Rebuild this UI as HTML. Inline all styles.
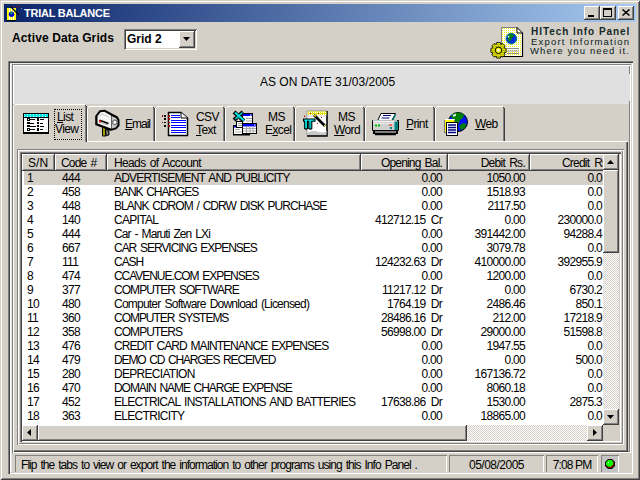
<!DOCTYPE html>
<html><head><meta charset="utf-8">
<style>
*{margin:0;padding:0;box-sizing:border-box}
html,body{width:640px;height:480px;overflow:hidden;background:#d4d0c8;font-family:"Liberation Sans",sans-serif;font-size:11px;color:#000}
.a{position:absolute}
.raised{box-shadow:inset -1px -1px #404040,inset 1px 1px #fff,inset -2px -2px #808080}
.sunk{box-shadow:inset 1px 1px #808080,inset -1px -1px #fff,inset 2px 2px #404040,inset -2px -2px #d4d0c8}
.t{white-space:nowrap;line-height:14px}
#win{left:0;top:0;width:640px;height:480px;box-shadow:inset 1px 1px #d4d0c8,inset -1px -1px #404040,inset 2px 2px #fff,inset -2px -2px #808080}
#title{left:4px;top:4px;width:632px;height:18px;background:linear-gradient(to right,#0a246a,#a6caf0)}
.cb{width:16px;height:14px;top:6px;background:#d4d0c8;box-shadow:inset -1px -1px #404040,inset 1px 1px #fff,inset -2px -2px #808080}
.grid .r{position:absolute;left:0;width:581px;height:14px}
.grid .c{position:absolute;top:0;white-space:nowrap;line-height:14px;font-size:12px;letter-spacing:-0.7px}
.hdr{position:absolute;top:0;height:17px;padding-top:1px;word-spacing:1.5px;background:#d4d0c8;box-shadow:inset -1px -1px #404040,inset 1px 1px #fff,inset -2px -2px #808080;line-height:16px;white-space:nowrap;overflow:hidden;font-size:12px;letter-spacing:-0.6px}
.tab{position:absolute;top:106px;height:35px;background:#d4d0c8;box-shadow:inset 1px 1px #fff,inset -1px 0 #404040,inset -2px 0 #808080}
.tab::before{content:"";position:absolute;left:0;top:0;width:1px;height:1px;background:#d4d0c8;box-shadow:1px 0 #d4d0c8,0 1px #d4d0c8,1px 1px #fff}
.tab::after{content:"";position:absolute;right:1px;top:0;width:1px;height:1px;background:#d4d0c8;box-shadow:1px 0 #d4d0c8,1px 1px #d4d0c8,0 1px #404040}
.tab .lbl{position:absolute;line-height:12px;text-align:center;white-space:nowrap}
.u{text-decoration:underline}
.lbl2{font-size:12px;letter-spacing:-0.6px;line-height:16px}
.chk{background-color:#fff;background-image:linear-gradient(45deg,#d4d0c8 25%,transparent 25%,transparent 75%,#d4d0c8 75%),linear-gradient(45deg,#d4d0c8 25%,transparent 25%,transparent 75%,#d4d0c8 75%);background-size:2px 2px;background-position:0 0,1px 1px}
.sp{position:absolute;height:17px;top:455px;box-shadow:inset 1px 1px #808080,inset -1px 0 #fff;line-height:21px;white-space:nowrap;overflow:hidden}
</style></head><body>
<div id="win" class="a"></div>
<!-- title bar -->
<div id="title" class="a"></div>
<svg class="a" style="left:6px;top:6px" width="16" height="16" viewBox="0 0 16 16">
  <rect x="1" y="2" width="9" height="13" fill="#ffff00"/>
  <rect x="3" y="2" width="1" height="13" fill="#fff"/><rect x="5" y="2" width="1" height="13" fill="#fff"/><rect x="7" y="2" width="1" height="13" fill="#fff"/>
  <rect x="1" y="14" width="9" height="1" fill="#000"/>
  <circle cx="5.5" cy="8.3" r="2.7" fill="#0000d0"/><path d="M3.5 7Q5 5.5 7 6.5L6 8.5L4.5 8Z" fill="#00a060"/><rect x="15" y="2" width="1" height="1" fill="#a0a0a0"/>
  <line x1="5" y1="1" x2="13" y2="9" stroke="#000" stroke-width="1.3"/>
  <rect x="7" y="0" width="1" height="1" fill="#c00000"/><rect x="10" y="0" width="1" height="1" fill="#c00000"/><rect x="13" y="0" width="1" height="1" fill="#c00000"/>
</svg>
<div class="a t" style="left:24px;top:6px;color:#fff;font-weight:bold;letter-spacing:-0.25px;line-height:14px">TRIAL BALANCE</div>
<div class="a cb" style="left:584px"><div class="a" style="left:4px;top:9px;width:6px;height:2px;background:#000"></div></div>
<div class="a cb" style="left:600px"><div class="a" style="left:3px;top:2px;width:9px;height:9px;border:1px solid #000;border-top-width:2px"></div></div>
<div class="a cb" style="left:618px"><svg class="a" style="left:4px;top:3px" width="8" height="7" viewBox="0 0 8 7"><path d="M0.5 0.5L7.5 6.5M7.5 0.5L0.5 6.5" stroke="#000" stroke-width="1.5"/></svg></div>

<!-- top controls -->
<div class="a t" style="left:12px;top:30px;font-size:12px;font-weight:bold;line-height:16px;letter-spacing:0.12px">Active Data Grids</div>
<div class="a sunk" style="left:124px;top:29px;width:73px;height:21px;background:#fff"></div>
<div class="a t" style="left:127px;top:31px;font-size:12px;font-weight:bold;line-height:16px">Grid 2</div>
<div class="a raised" style="left:179px;top:31px;width:16px;height:17px;background:#d4d0c8"></div>
<svg class="a" style="left:183px;top:37px" width="8" height="5"><path d="M0 0H7L3.5 4Z" fill="#000"/></svg>

<!-- logo -->
<svg class="a" style="left:490px;top:26px" width="36" height="34" viewBox="0 0 36 34">
  <defs><pattern id="dots" width="2" height="2" patternUnits="userSpaceOnUse"><rect width="2" height="2" fill="#fff"/><rect width="1" height="1" fill="#f0f000"/></pattern></defs>
  <path d="M11.5 1.5H27L32.5 7V30.5H11.5Z" fill="url(#dots)" stroke="#808080"/>
  <path d="M32.5 7V30.5H11.5" fill="none" stroke="#000" stroke-width="1.2"/>
  <path d="M27 1.5V7H32.5Z" fill="#fff" stroke="#000"/>
  <circle cx="21.3" cy="12.6" r="5.3" fill="#0030e0" stroke="#008080" stroke-width="1"/>
  <path d="M18 9Q20 7.5 23 8.5L24 10L21.5 12.5L20 16L18 14Z" fill="#008000"/>
  <path d="M17.5 10.5L19.5 9.5L19 12Z" fill="#fff"/>
  <path d="M17 22.5H29M17 25H29M17 27.5H29" stroke="#909090"/>
  <g transform="translate(8.5 24.3)">
    <defs><pattern id="gd" width="2" height="2" patternUnits="userSpaceOnUse"><rect width="2" height="2" fill="#f8f800"/><rect width="1" height="1" fill="#404000"/></pattern></defs>
    <path d="M-1.8 -7.8H1.8L2.3 -5.8L4.3 -6.8L6.6 -4.5L5.6 -2.5L7.6 -2V2L5.6 2.5L6.6 4.5L4.3 6.8L2.3 5.8L1.8 7.8H-1.8L-2.3 5.8L-4.3 6.8L-6.6 4.5L-5.6 2.5L-7.6 2V-2L-5.6 -2.5L-6.6 -4.5L-4.3 -6.8L-2.3 -5.8Z" fill="url(#gd)" stroke="#000" stroke-width="0.8"/>
    <circle r="3.2" fill="#f0f000" stroke="#000" stroke-width="1"/>
    <circle r="1.3" fill="#fff"/>
  </g>
</svg>
<div class="a t" style="left:531px;top:26px;font-weight:bold;font-size:10px;color:#142828;letter-spacing:0.95px;line-height:12px">HITech Info Panel</div>
<div class="a t" style="left:531px;top:35.5px;font-size:9.5px;color:#0c2020;letter-spacing:1.2px;line-height:12px">Export Information</div>
<div class="a t" style="left:530px;top:44.5px;font-size:9.5px;color:#0c2020;letter-spacing:1.13px;line-height:12px">Where you need it.</div>

<!-- outer frame -->
<div class="a" style="left:8px;top:61px;width:625px;height:413px;box-shadow:inset 1px 1px #808080,inset 2px 2px #404040,inset -1px -1px #fff,inset -2px -2px #d4d0c8"></div>
<div class="a" style="left:10px;top:63px;width:621px;height:409px;box-shadow:inset 0 1px #e8e8e8,inset 1px 0 #fff,inset 2px 0 #e4e4e4"></div>
<!-- etched panel -->
<div class="a" style="left:12px;top:64px;width:619px;height:389px;box-shadow:inset 1px 1px #808080,inset -1px -1px #fff,inset 2px 2px #fff,inset -2px -2px #808080"></div>
<!-- header label -->
<div class="a" style="left:14px;top:66px;width:615px;height:38px;background:#e0e0e0"></div>
<div class="a" style="left:629px;top:74px;width:1px;height:27px;background:#e0e0e0"></div>
<div class="a t" style="left:260px;top:74px;font-size:12px;line-height:16px">AS ON DATE 31/03/2005</div>

<!-- tab page -->
<div class="a" style="left:13px;top:141px;width:615px;height:311px;box-shadow:inset 1px 1px #fff,inset -1px -1px #404040,inset -2px -2px #808080"></div>
<!-- etched frame A -->
<div class="a" style="left:17px;top:149px;width:607px;height:296px;box-shadow:inset 1px 1px #808080,inset -1px -1px #fff,inset 2px 2px #fff,inset -2px -2px #808080"></div>

<!-- tabs -->
<div class="tab" style="left:87px;width:68px"></div>
<div class="tab" style="left:155px;width:70px"></div>
<div class="tab" style="left:225px;width:70px"></div>
<div class="tab" style="left:295px;width:70px"></div>
<div class="tab" style="left:365px;width:70px"></div>
<div class="tab" style="left:435px;width:70px"></div>
<div class="tab" style="left:13px;top:104px;width:74px;height:38px;box-shadow:inset 1px 1px #fff,inset -1px 0 #404040,inset -2px 0 #808080"></div>

<!-- tab icons -->
<svg class="a" style="left:23px;top:113px" width="27" height="23" viewBox="0 0 27 23">
  <defs><pattern id="cy" width="3" height="2" patternUnits="userSpaceOnUse"><rect width="3" height="2" fill="#00e8e8"/><rect x="1" y="1" width="1" height="1" fill="#c0ffff"/></pattern></defs>
  <rect x="0.5" y="0.5" width="25" height="20" fill="#fff" stroke="#000"/>
  <rect x="1" y="1" width="24" height="3" fill="url(#cy)"/>
  <path d="M0 4.5H26" stroke="#000"/>
  <rect x="1" y="19" width="25" height="2" fill="#000"/>
  <g fill="#000">
    <rect x="4" y="5" width="3" height="3"/><rect x="7" y="6" width="5" height="1"/>
    <rect x="4" y="9" width="3" height="2"/><rect x="7" y="10" width="4" height="1"/>
    <rect x="4" y="12" width="3" height="2"/><rect x="7" y="13" width="6" height="1"/>
    <rect x="4" y="15" width="3" height="3"/><rect x="7" y="16" width="5" height="1"/>
    <rect x="14" y="5" width="2" height="3"/><rect x="17" y="6" width="4" height="1"/>
    <rect x="14" y="9" width="2" height="2"/><rect x="17" y="10" width="3" height="1"/>
    <rect x="14" y="12" width="2" height="2"/><rect x="17" y="13" width="4" height="1"/>
    <rect x="14" y="15" width="2" height="3"/><rect x="17" y="16" width="3" height="1"/>
  </g>
  <rect x="5" y="6" width="1" height="1" fill="#fff"/><rect x="5" y="16" width="1" height="1" fill="#fff"/>
</svg>
<div class="a" style="left:54px;top:109px;width:28px;height:31px;border:1px dotted #000"></div>
<div class="a t lbl2" style="left:57px;top:109px"><span class="u">L</span>ist</div>
<div class="a t lbl2" style="left:55px;top:121px">View</div>

<svg class="a" style="left:91px;top:106px" width="32" height="32" viewBox="0 0 32 32">
  <path d="M11.5 21V30H14.5V22Z" fill="#a0a000" stroke="#000"/>
  <path d="M14.5 23L18 24V29L14.5 30Z" fill="#404040" stroke="#000" stroke-width="0.8"/>
  <path d="M15.5 25.5L17 26.5M15.5 27L17 28" stroke="#c0c0c0" stroke-width="0.7"/>
  <path d="M5.5 9.5L9 5L13.5 4.5L21 8.5L26 11L27.7 14V19.5L25 22.5L20 24L5 18.5V10Z" fill="#000" stroke="#000" stroke-width="1.6" stroke-linejoin="round"/>
  <path d="M6.5 10L9.5 6.2L13.3 5.8L20 9.5V22.5L6.5 17.5Z" fill="#f4f4f4"/>
  <path d="M7 10.5L11 8L18 11" stroke="#c8c8c8" stroke-width="1" fill="none"/>
  <path d="M20.5 10L25 12L26.5 14.5V19L24.5 21.5L20.5 22.8Z" fill="#c8c8c8"/>
  <circle cx="23.8" cy="16.3" r="2.3" fill="#e8e8e8" stroke="#505050" stroke-width="1"/>
  <circle cx="24.3" cy="16.6" r="0.9" fill="#fff"/>
  <path d="M8.5 14.2L17.5 17.5" stroke="#000" stroke-width="1.6"/>
  <path d="M9 16L17 19" stroke="#909090" stroke-width="0.8"/>
  <rect x="8" y="14.2" width="1.6" height="2.2" fill="#ff0000"/>
</svg>
<div class="a t lbl2" style="left:125px;top:116px;letter-spacing:-1px"><span class="u">E</span>mail</div>

<svg class="a" style="left:161px;top:111px" width="28" height="26" viewBox="0 0 28 26">
  <path d="M7.5 1.5H20L26.5 7V24.5H7.5Z" fill="#fff" stroke="#000" stroke-width="1.5"/>
  <path d="M20 1.5V7H26.5" fill="#fff" stroke="#000"/>
  <g stroke="#0000ff" stroke-width="1"><path d="M10 4.5H19M10 6.5H19M10 9.5H25M10 11.5H25M10 14.5H25M10 16.5H25M10 19.5H25M10 21.5H25"/></g>
  <g fill="#a00000"><rect x="1" y="4" width="1" height="2"/><rect x="7" y="4" width="2" height="2"/><rect x="7" y="7" width="2" height="2"/><rect x="1" y="11" width="1" height="1"/><rect x="7" y="11" width="2" height="1"/><rect x="7" y="14" width="2" height="2"/></g>
  <g fill="#000"><rect x="3" y="4" width="2" height="2"/><rect x="3" y="7" width="2" height="2"/><rect x="3" y="11" width="2" height="1"/><rect x="3" y="14" width="2" height="2"/></g>
</svg>
<div class="a t lbl2" style="left:196px;top:109px">CSV</div>
<div class="a t lbl2" style="left:196px;top:122px"><span class="u">T</span>ext</div>

<svg class="a" style="left:231px;top:109px" width="28" height="28" viewBox="0 0 28 28">
  <rect x="2.5" y="16.5" width="16" height="9" fill="#fff" stroke="#000"/><rect x="3" y="17" width="3" height="1.5" fill="#0000ff"/>
  <path d="M4 20.5H9M4 23H15" stroke="#b0b0b0"/><rect x="2" y="25" width="17" height="1.5" fill="#000"/>
  <rect x="5.5" y="12.5" width="6" height="6" fill="#fff" stroke="#000"/><path d="M7 14.5H11M7 16.5H11" stroke="#a0a0a0" stroke-width="1"/>
  <rect x="11.5" y="4.5" width="10" height="10" fill="#fff" stroke="#000"/><rect x="12" y="5" width="9" height="2" fill="#0000ff"/><rect x="19" y="5.5" width="1.5" height="1" fill="#fff"/>
  <path d="M15 9.5H21M15 12H21" stroke="#a0a0a0" stroke-width="1.2"/>
  <rect x="11.5" y="14.5" width="14" height="10" fill="#fff" stroke="#000"/><rect x="12" y="15" width="13" height="2.5" fill="#0000ff"/><rect x="23" y="15.5" width="1.5" height="1" fill="#fff"/>
  <path d="M12 19.5H25M12 22H25M15.5 17V24M19 17V24M22 17V24" stroke="#a8a8a8"/>
  <path d="M3 3L13 12M12 3L3 11" stroke="#000" stroke-width="4.2"/>
  <path d="M4 3.5L13 11.5" stroke="#00e0e0" stroke-width="2.2"/><path d="M11.5 3.5L4 10" stroke="#00e0e0" stroke-width="1.4"/>
  <path d="M4 10L7 8L9 10Z" fill="#008080"/>
</svg>
<div class="a t lbl2" style="left:268px;top:109px">MS</div>
<div class="a t lbl2" style="left:265px;top:122px">E<span class="u">x</span>cel</div>

<svg class="a" style="left:301px;top:108px" width="30" height="30" viewBox="0 0 30 30">
  <defs><pattern id="yd" width="2" height="2" patternUnits="userSpaceOnUse"><rect width="2" height="2" fill="#e8e800"/><rect width="1" height="1" fill="#fff"/></pattern></defs>
  <path d="M6 3H26V27H6Z" fill="#fff" stroke="#808080" stroke-width="0.8"/>
  <path d="M26 3V28H6" fill="none" stroke="#000" stroke-width="1.5"/>
  <rect x="6.5" y="3.5" width="19" height="3.5" fill="url(#yd)"/>
  <path d="M6.5 7L8 9L9.5 7L11 9L12.5 7L14 9L15.5 7L17 9L18.5 7L20 9L21.5 7L23 9L24.5 7L25.5 8" fill="none" stroke="#c0c0c0" stroke-width="0.6"/>
  <path d="M6.5 24Q12 21 16 23Q21 25 25.5 23.5V27H6.5Z" fill="#c8c8c8"/>
  <path d="M6.5 24Q12 21 16 23Q21 25 25.5 23.5" fill="none" stroke="#fff"/>
  <path d="M2.5 11H14V13.2H10.8V20.5Q9.3 21.8 7.8 20.5V13.2H6.5V20.5Q5 21.8 3.5 20.5V13.2H2.5Z" fill="#00e8e8" stroke="#000" stroke-width="1.1"/>
  <path d="M4 14V20M9.3 14V20" stroke="#008080" stroke-width="0.6"/>
  <path d="M13 7L24 18" stroke="#000" stroke-width="2.6"/>
  <path d="M13 7L15 8.5" stroke="#e8e800" stroke-width="1.5"/>
  <rect x="23" y="17" width="1.3" height="1.3" fill="#e8e800"/>
  <g fill="#c00000"><rect x="9" y="5" width="1" height="1"/><rect x="17" y="5" width="1" height="1"/><rect x="20" y="9" width="1" height="1"/><rect x="16" y="15" width="1" height="1"/><rect x="3" y="7.5" width="1" height="1.5"/></g>
</svg>
<div class="a t lbl2" style="left:338px;top:109px">MS</div>
<div class="a t lbl2" style="left:334px;top:122px"><span class="u">W</span>ord</div>

<svg class="a" style="left:369px;top:107px" width="32" height="32" viewBox="0 0 32 32">
  <path d="M12 6.5H26.5L22 15H8Z" fill="#fff" stroke="#000"/>
  <path d="M26 7L22.5 14.5L24 14.5L27 8Z" fill="#008080"/>
  <path d="M14 8.5H22M12.5 11H20.5M11 13.5H19.5" stroke="#000080" stroke-width="1.2"/>
  <path d="M3.5 13.5H29.5V23.5H3.5Z" fill="#d0d0d0" stroke="#000"/>
  <path d="M4 14H25L28 14" stroke="#fff" stroke-width="1.5"/>
  <path d="M4 16.5H25" stroke="#e8e8e8"/>
  <path d="M25.5 14.5L29 14.5V23H25.5Z" fill="#008080"/>
  <rect x="6" y="17.5" width="2" height="2" fill="#00c000"/><rect x="9" y="17.5" width="2" height="2" fill="#00c000"/>
  <rect x="20" y="17.5" width="3" height="1" fill="#ff0000"/><rect x="21" y="20" width="2" height="2" fill="#008080"/>
  <path d="M4 23.5H29V27H4Z" fill="#000"/>
  <path d="M6 25H27" stroke="#fff" stroke-width="1"/>
  <path d="M6 27.5H27" stroke="#000" stroke-width="1.5"/>
</svg>
<div class="a t lbl2" style="left:406px;top:116px"><span class="u">P</span>rint</div>

<svg class="a" style="left:440px;top:106px" width="32" height="32" viewBox="0 0 32 32">
  <circle cx="18" cy="16" r="9.5" fill="#0010ff" stroke="#000" stroke-width="1"/>
  <path d="M11 11Q13 6.5 18 6.5L24 8L23 12L20 14L18 19L15 17L13 13Z" fill="#008000"/>
  <path d="M19 20L23 17L26.5 18L25 22L21 24Z" fill="#008000"/>
  <path d="M13 9L15.5 7.5L16 9.5L13.5 11Z" fill="#fff"/>
  <path d="M11.5 9.5L13 8.5" stroke="#00c0c0"/>
  <rect x="4.5" y="13.5" width="10" height="13" fill="#ffff00" stroke="#808080"/>
  <path d="M4.5 13.5H14.5" stroke="#fff"/>
  <rect x="6.5" y="16.5" width="11" height="13" fill="#fff" stroke="#000"/>
  <path d="M8 19H16M8 21.5H16M8 24H16M8 26.5H16" stroke="#000080" stroke-width="1.3"/>
</svg>
<div class="a t lbl2" style="left:475px;top:116px"><span class="u">W</span>eb</div>

<!-- grid -->
<div class="a" style="left:20px;top:152px;width:601px;height:290px;background:#fff;box-shadow:inset 1px 1px #808080,inset 2px 2px #404040,inset -1px -1px #fff,inset -2px -2px #d4d0c8"></div>
<div class="a grid" style="left:22px;top:154px;width:581px;height:271px;overflow:hidden">
  <div class="hdr" style="left:0;width:33px;padding-left:6px;letter-spacing:0.1px">S/N</div>
  <div class="hdr" style="left:33px;width:52px;padding-left:6px;letter-spacing:-0.8px">Code #</div>
  <div class="hdr" style="left:85px;width:254px;padding-left:7px;letter-spacing:-0.63px">Heads of Account</div>
  <div class="hdr" style="left:339px;width:87px;text-align:right;padding-right:6px;letter-spacing:-0.82px">Opening Bal.</div>
  <div class="hdr" style="left:426px;width:82px;text-align:right;padding-right:5px;letter-spacing:-0.72px">Debit Rs.</div>
  <div class="hdr" style="left:508px;width:90px;text-align:left;padding-left:32px;letter-spacing:-0.8px;word-spacing:2.5px">Credit Rs.</div>
  <div id="rows" class="a" style="left:0;top:17px;width:581px;height:254px"><div class="r" style="top:0px"><div class="a" style="left:2px;top:0;width:579px;height:14px;background:#d4d0c8;"></div><div class="c" style="left:5px">1</div><div class="c" style="left:40px">444</div><div class="c" style="left:92px;letter-spacing:-0.821px;word-spacing:1.5px">ADVERTISEMENT AND PUBLICITY</div><div class="c" style="right:161px">0.00</div><div class="c" style="right:78px">1050.00</div><div class="c" style="right:1px">0.0</div></div>
<div class="r" style="top:14px"><div class="a" style="left:2px;top:0;width:579px;height:14px;"></div><div class="c" style="left:5px">2</div><div class="c" style="left:40px">458</div><div class="c" style="left:92px;letter-spacing:-1.066px;word-spacing:1.5px">BANK CHARGES</div><div class="c" style="right:161px">0.00</div><div class="c" style="right:78px">1518.93</div><div class="c" style="right:1px">0.0</div></div>
<div class="r" style="top:28px"><div class="a" style="left:2px;top:0;width:579px;height:14px;"></div><div class="c" style="left:5px">3</div><div class="c" style="left:40px">448</div><div class="c" style="left:92px;letter-spacing:-0.988px;word-spacing:1.5px">BLANK CDROM / CDRW DISK PURCHASE</div><div class="c" style="right:161px">0.00</div><div class="c" style="right:78px">2117.50</div><div class="c" style="right:1px">0.0</div></div>
<div class="r" style="top:42px"><div class="a" style="left:2px;top:0;width:579px;height:14px;"></div><div class="c" style="left:5px">4</div><div class="c" style="left:40px">140</div><div class="c" style="left:92px;letter-spacing:-0.7px;word-spacing:1.5px">CAPITAL</div><div class="c" style="right:161px">412712.15&nbsp;&nbsp;Cr</div><div class="c" style="right:78px">0.00</div><div class="c" style="right:1px">230000.0</div></div>
<div class="r" style="top:56px"><div class="a" style="left:2px;top:0;width:579px;height:14px;"></div><div class="c" style="left:5px">5</div><div class="c" style="left:40px">444</div><div class="c" style="left:92px;letter-spacing:-0.906px;word-spacing:1.5px">Car - Maruti Zen LXi</div><div class="c" style="right:161px">0.00</div><div class="c" style="right:78px">391442.00</div><div class="c" style="right:1px">94288.4</div></div>
<div class="r" style="top:70px"><div class="a" style="left:2px;top:0;width:579px;height:14px;"></div><div class="c" style="left:5px">6</div><div class="c" style="left:40px">667</div><div class="c" style="left:92px;letter-spacing:-1.033px;word-spacing:1.5px">CAR SERVICING EXPENSES</div><div class="c" style="right:161px">0.00</div><div class="c" style="right:78px">3079.78</div><div class="c" style="right:1px">0.0</div></div>
<div class="r" style="top:84px"><div class="a" style="left:2px;top:0;width:579px;height:14px;"></div><div class="c" style="left:5px">7</div><div class="c" style="left:40px">111</div><div class="c" style="left:92px;letter-spacing:-1.037px;word-spacing:1.5px">CASH</div><div class="c" style="right:161px">124232.63&nbsp;&nbsp;Dr</div><div class="c" style="right:78px">410000.00</div><div class="c" style="right:1px">392955.9</div></div>
<div class="r" style="top:98px"><div class="a" style="left:2px;top:0;width:579px;height:14px;"></div><div class="c" style="left:5px">8</div><div class="c" style="left:40px">474</div><div class="c" style="left:92px;letter-spacing:-1.05px;word-spacing:1.5px">CCAVENUE.COM EXPENSES</div><div class="c" style="right:161px">0.00</div><div class="c" style="right:78px">1200.00</div><div class="c" style="right:1px">0.0</div></div>
<div class="r" style="top:112px"><div class="a" style="left:2px;top:0;width:579px;height:14px;"></div><div class="c" style="left:5px">9</div><div class="c" style="left:40px">377</div><div class="c" style="left:92px;letter-spacing:-0.952px;word-spacing:1.5px">COMPUTER SOFTWARE</div><div class="c" style="right:161px">11217.12&nbsp;&nbsp;Dr</div><div class="c" style="right:78px">0.00</div><div class="c" style="right:1px">6730.2</div></div>
<div class="r" style="top:126px"><div class="a" style="left:2px;top:0;width:579px;height:14px;"></div><div class="c" style="left:5px">10</div><div class="c" style="left:40px">480</div><div class="c" style="left:92px;letter-spacing:-0.779px;word-spacing:1.5px">Computer Software Download (Licensed)</div><div class="c" style="right:161px">1764.19&nbsp;&nbsp;Dr</div><div class="c" style="right:78px">2486.46</div><div class="c" style="right:1px">850.1</div></div>
<div class="r" style="top:140px"><div class="a" style="left:2px;top:0;width:579px;height:14px;"></div><div class="c" style="left:5px">11</div><div class="c" style="left:40px">360</div><div class="c" style="left:92px;letter-spacing:-1.033px;word-spacing:1.5px">COMPUTER SYSTEMS</div><div class="c" style="right:161px">28486.16&nbsp;&nbsp;Dr</div><div class="c" style="right:78px">212.00</div><div class="c" style="right:1px">17218.9</div></div>
<div class="r" style="top:154px"><div class="a" style="left:2px;top:0;width:579px;height:14px;"></div><div class="c" style="left:5px">12</div><div class="c" style="left:40px">358</div><div class="c" style="left:92px;letter-spacing:-0.95px;word-spacing:1.5px">COMPUTERS</div><div class="c" style="right:161px">56998.00&nbsp;&nbsp;Dr</div><div class="c" style="right:78px">29000.00</div><div class="c" style="right:1px">51598.8</div></div>
<div class="r" style="top:168px"><div class="a" style="left:2px;top:0;width:579px;height:14px;"></div><div class="c" style="left:5px">13</div><div class="c" style="left:40px">476</div><div class="c" style="left:92px;letter-spacing:-0.963px;word-spacing:1.5px">CREDIT CARD MAINTENANCE EXPENSES</div><div class="c" style="right:161px">0.00</div><div class="c" style="right:78px">1947.55</div><div class="c" style="right:1px">0.0</div></div>
<div class="r" style="top:182px"><div class="a" style="left:2px;top:0;width:579px;height:14px;"></div><div class="c" style="left:5px">14</div><div class="c" style="left:40px">479</div><div class="c" style="left:92px;letter-spacing:-1.137px;word-spacing:1.5px">DEMO CD CHARGES RECEIVED</div><div class="c" style="right:161px">0.00</div><div class="c" style="right:78px">0.00</div><div class="c" style="right:1px">500.0</div></div>
<div class="r" style="top:196px"><div class="a" style="left:2px;top:0;width:579px;height:14px;"></div><div class="c" style="left:5px">15</div><div class="c" style="left:40px">280</div><div class="c" style="left:92px;letter-spacing:-0.7px;word-spacing:1.5px">DEPRECIATION</div><div class="c" style="right:161px">0.00</div><div class="c" style="right:78px">167136.72</div><div class="c" style="right:1px">0.0</div></div>
<div class="r" style="top:210px"><div class="a" style="left:2px;top:0;width:579px;height:14px;"></div><div class="c" style="left:5px">16</div><div class="c" style="left:40px">470</div><div class="c" style="left:92px;letter-spacing:-1.06px;word-spacing:1.5px">DOMAIN NAME CHARGE EXPENSE</div><div class="c" style="right:161px">0.00</div><div class="c" style="right:78px">8060.18</div><div class="c" style="right:1px">0.0</div></div>
<div class="r" style="top:224px"><div class="a" style="left:2px;top:0;width:579px;height:14px;"></div><div class="c" style="left:5px">17</div><div class="c" style="left:40px">452</div><div class="c" style="left:92px;letter-spacing:-0.758px;word-spacing:1.5px">ELECTRICAL INSTALLATIONS AND BATTERIES</div><div class="c" style="right:161px">17638.86&nbsp;&nbsp;Dr</div><div class="c" style="right:78px">1530.00</div><div class="c" style="right:1px">2875.3</div></div>
<div class="r" style="top:238px"><div class="a" style="left:2px;top:0;width:579px;height:14px;"></div><div class="c" style="left:5px">18</div><div class="c" style="left:40px">363</div><div class="c" style="left:92px;letter-spacing:-0.7px;word-spacing:1.5px">ELECTRICITY</div><div class="c" style="right:161px">0.00</div><div class="c" style="right:78px">18865.00</div><div class="c" style="right:1px">0.0</div></div></div>
</div>

<!-- scrollbars -->
<div class="a chk" style="left:603px;top:170px;width:16px;height:239px"></div>
<div class="a raised" style="left:603px;top:154px;width:16px;height:16px;background:#d4d0c8"></div>
<svg class="a" style="left:607px;top:160px" width="7" height="4"><path d="M3.5 0L7 4H0Z" fill="#000"/></svg>
<div class="a raised" style="left:603px;top:170px;width:16px;height:83px;background:#d4d0c8"></div>
<div class="a raised" style="left:603px;top:409px;width:16px;height:16px;background:#d4d0c8"></div>
<svg class="a" style="left:607px;top:415px" width="7" height="4"><path d="M0 0H7L3.5 4Z" fill="#000"/></svg>
<div class="a" style="left:603px;top:425px;width:16px;height:16px;background:#d4d0c8"></div>
<div class="a chk" style="left:38px;top:425px;width:565px;height:16px"></div>
<div class="a raised" style="left:22px;top:425px;width:16px;height:16px;background:#d4d0c8"></div>
<svg class="a" style="left:27px;top:429px" width="4" height="7"><path d="M4 0V7L0 3.5Z" fill="#000"/></svg>
<div class="a raised" style="left:38px;top:425px;width:429px;height:16px;background:#d4d0c8"></div>
<div class="a raised" style="left:587px;top:425px;width:16px;height:16px;background:#d4d0c8"></div>
<svg class="a" style="left:593px;top:429px" width="4" height="7"><path d="M0 0V7L4 3.5Z" fill="#000"/></svg>

<!-- status bar -->
<div class="sp" style="left:15px;width:432px;padding-left:6px;font-size:12px;letter-spacing:-0.94px;word-spacing:1.5px">Flip the tabs to view or export the information to other programs using this Info Panel .</div>
<div class="sp" style="left:449px;width:95px;text-align:center;font-size:12px;letter-spacing:-0.5px">05/08/2005</div>
<div class="sp" style="left:546px;width:52px;text-align:center;font-size:12px;letter-spacing:-0.85px">7:08 PM</div>
<div class="sp" style="left:601px;width:18px;background:#c4c4c4"></div>
<svg class="a" style="left:604px;top:458px" width="12" height="12" viewBox="0 0 12 12">
  <path d="M4 1H8L11 4V8L8 11H4L1 8V4Z" fill="#000"/>
  <path d="M4.3 2H7.7L10 4.3V7.7L7.7 10H4.3L2 7.7V4.3Z" fill="#800000"/>
  <path d="M4.3 2H7.5L9.2 3.7V6.5L6.7 8.8H4.3L2 6.8V4.3Z" fill="#00ff00"/>
  <rect x="4" y="4" width="1" height="1" fill="#e0ffe0"/>
</svg>
</body></html>
